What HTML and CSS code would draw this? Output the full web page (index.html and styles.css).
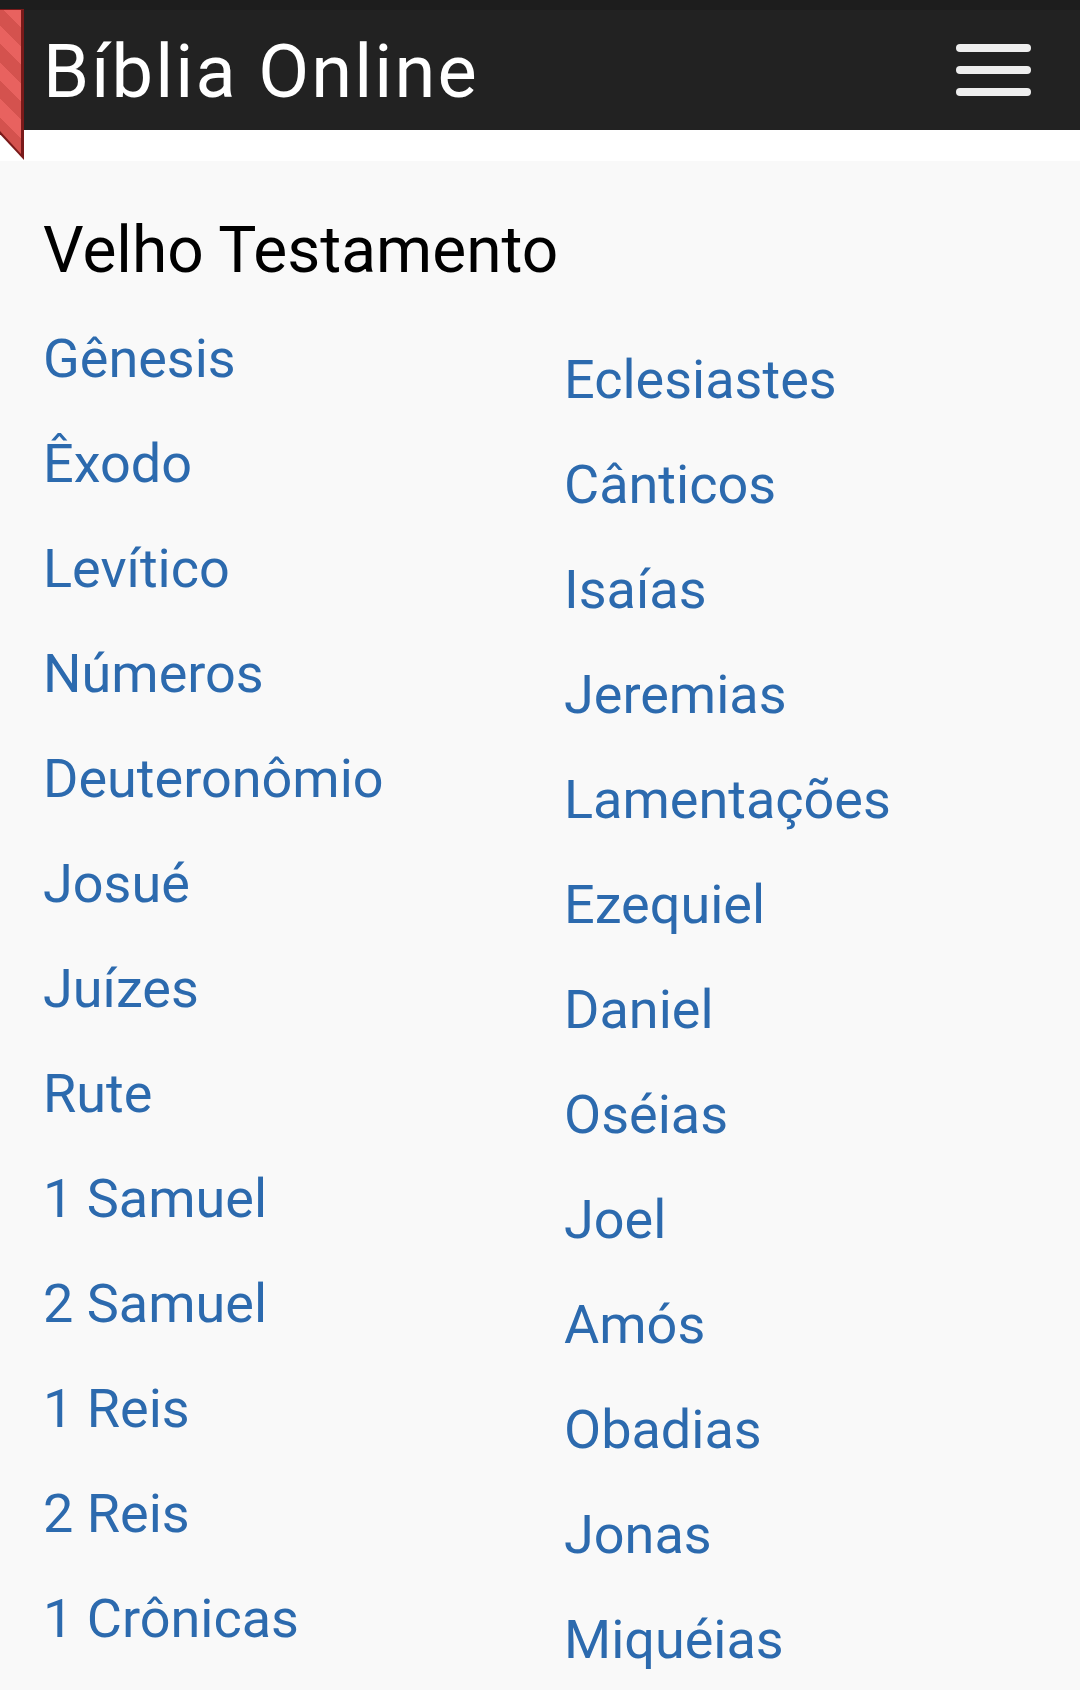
FILE: index.html
```html
<!DOCTYPE html>
<html lang="pt">
<head>
<meta charset="utf-8">
<title>Bíblia Online</title>
<link rel="stylesheet" href="styles.css">
</head>
<body>
<header class="navbar">
  <div class="ribbon"></div>
  <h1 class="brand">Bíblia Online</h1>
  <button class="menu" aria-label="Menu"><span></span><span></span><span></span></button>
</header>
<main class="content">
  <h2 class="section-title">Velho Testamento</h2>
  <div class="books">
    <ul class="col">
      <li><a href="#">Gênesis</a></li>
      <li><a href="#">Êxodo</a></li>
      <li><a href="#">Levítico</a></li>
      <li><a href="#">Números</a></li>
      <li><a href="#">Deuteronômio</a></li>
      <li><a href="#">Josué</a></li>
      <li><a href="#">Juízes</a></li>
      <li><a href="#">Rute</a></li>
      <li><a href="#">1 Samuel</a></li>
      <li><a href="#">2 Samuel</a></li>
      <li><a href="#">1 Reis</a></li>
      <li><a href="#">2 Reis</a></li>
      <li><a href="#">1 Crônicas</a></li>
    </ul>
    <ul class="col col-second">
      <li><a href="#">Eclesiastes</a></li>
      <li><a href="#">Cânticos</a></li>
      <li><a href="#">Isaías</a></li>
      <li><a href="#">Jeremias</a></li>
      <li><a href="#">Lamentações</a></li>
      <li><a href="#">Ezequiel</a></li>
      <li><a href="#">Daniel</a></li>
      <li><a href="#">Oséias</a></li>
      <li><a href="#">Joel</a></li>
      <li><a href="#">Amós</a></li>
      <li><a href="#">Obadias</a></li>
      <li><a href="#">Jonas</a></li>
      <li><a href="#">Miquéias</a></li>
    </ul>
  </div>
</main>
</body>
</html>
```
FILE: styles.css
```css
* { box-sizing: border-box; }
html, body { margin: 0; padding: 0; }
body {
  width: 1080px;
  height: 1690px;
  overflow: hidden;
  background: #fff;
  font-family: Roboto, "Liberation Sans", sans-serif;
}
.navbar {
  position: relative;
  height: 130px;
  background: #222;
  border-top: 10px solid #1d1d1d;
  padding: 0 49px 0 43px;
  display: flex;
  align-items: center;
  justify-content: space-between;
}
.ribbon {
  position: absolute;
  left: 0;
  top: -1px;
  width: 24px;
  height: 151px;
  background: #7a1a1a;
  clip-path: polygon(0 0, 100% 0, 100% 100%, 0 83%);
}
.ribbon::before {
  content: "";
  position: absolute;
  inset: 1px 3px 6px 0;
  background: repeating-linear-gradient(45deg, #e8625f 0 13px, #d4524e 13px 26px);
  clip-path: polygon(0 0, 100% 0, 100% 100%, 0 84%);
}
.brand {
  margin: 4px 0 0;
  color: #fff;
  font-size: 74px;
  font-weight: 400;
  letter-spacing: 2.1px;
  line-height: 1;
}
.menu {
  width: 75px;
  height: 52px;
  padding: 0;
  border: 0;
  background: none;
  display: flex;
  flex-direction: column;
  justify-content: space-between;
}
.menu span {
  display: block;
  width: 100%;
  height: 8px;
  border-radius: 4px;
  background: #eee;
}
.content {
  margin-top: 31px;
  height: 1529px;
  background: #f9f9f9;
  padding: 55px 43px 0;
}
.section-title {
  margin: 0;
  color: #000;
  font-size: 64px;
  font-weight: 400;
  line-height: 70px;
}
.books {
  display: grid;
  grid-template-columns: 521px 1fr;
  margin-top: 43px;
}
.col {
  list-style: none;
  margin: 0;
  padding: 0;
  display: flex;
  flex-direction: column;
}
.col-second { padding-top: 21px; }
.col li { height: 105px; }
.col a {
  color: #2c6aae;
  font-size: 54px;
  line-height: 60px;
  text-decoration: none;
}
```
